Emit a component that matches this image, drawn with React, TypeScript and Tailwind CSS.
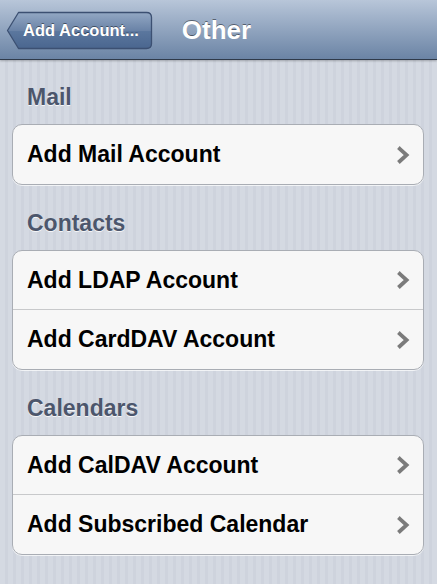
import React from "react";

const sections = [
  { title: "Mail", rows: ["Add Mail Account"] },
  { title: "Contacts", rows: ["Add LDAP Account", "Add CardDAV Account"] },
  { title: "Calendars", rows: ["Add CalDAV Account", "Add Subscribed Calendar"] },
];

function Chevron() {
  return (
    <svg width="13" height="18" viewBox="0 0 13 18" className="shrink-0">
      <polyline points="2.8,2.8 9.6,9 2.8,15.2" fill="none" stroke="#7b7b7b" strokeWidth="3.8" strokeLinecap="square" strokeLinejoin="miter" />
    </svg>
  );
}

function BackButton() {
  return (
    <div className="relative w-[147px] h-[39px] ml-[6px]">
      <svg width="147" height="39" viewBox="0 0 147 39" className="absolute inset-0">
        <defs>
          <linearGradient id="bb" x1="0" y1="0" x2="0" y2="1">
            <stop offset="0" stopColor="#93a8c4" />
            <stop offset="0.5" stopColor="#6a83a7" />
            <stop offset="0.52" stopColor="#5b779e" />
            <stop offset="1" stopColor="#4a668f" />
          </linearGradient>
        </defs>
        <path
          d="M1.5 19.5 L12.5 1.5 L140.5 1.5 Q145.5 1.5 145.5 6.5 L145.5 32.5 Q145.5 37.5 140.5 37.5 L12.5 37.5 Z"
          fill="url(#bb)"
          stroke="#3c5072"
          strokeWidth="1.3"
          strokeLinejoin="round"
        />
      </svg>
      <span className="relative flex h-full items-center pl-[17px] text-[16.5px] font-bold text-white [text-shadow:0_-1px_0_rgba(0,0,0,0.45)]">
        Add Account...
      </span>
    </div>
  );
}

export default function App() {
  return (
    <div
      className="w-[437px] h-[584px] overflow-hidden bg-[repeating-linear-gradient(90deg,#d4d9e2_0px,#d4d9e2_5px,#ced3dd_5px,#ced3dd_8px)]"
      style={{ fontFamily: '"Liberation Sans", Arial, sans-serif' }}
    >
      <div className="grid grid-cols-[1fr_auto_1fr] items-center h-[60px] bg-gradient-to-b from-[#b8c6d9] to-[#6b84a5] border-b border-[#2f3a4a] shadow-[0_1px_2px_rgba(0,0,0,0.25)]">
        <div className="pt-[1px]">
          <BackButton />
        </div>
        <h1 className="text-[26px] font-bold text-white [text-shadow:0_-1px_0_rgba(0,0,0,0.45)] leading-none -ml-[4px]">
          Other
        </h1>
        <div />
      </div>

      <div className="pt-[24px] px-[12px] pr-[13px]">
        {sections.map((s, i) => (
          <section key={s.title} className={i === 0 ? "" : "mt-[25px]"}>
            <h2 className="h-[26px] leading-[26px] mb-[14px] pl-[15px] text-[23px] font-bold text-[#4c566c] [text-shadow:0_1px_0_rgba(255,255,255,0.8)]">
              {s.title}
            </h2>
            <div className="rounded-[10px] border border-[#a9adb4] bg-[#f7f7f7] divide-y divide-[#c8c9cb] shadow-[0_1px_0_rgba(255,255,255,0.7)]">
              {s.rows.map((r) => (
                <div key={r} className="h-[59px] flex items-center justify-between pl-[14px] pr-[13px]">
                  <span className="text-[23px] font-bold text-black">{r}</span>
                  <Chevron />
                </div>
              ))}
            </div>
          </section>
        ))}
      </div>
    </div>
  );
}
